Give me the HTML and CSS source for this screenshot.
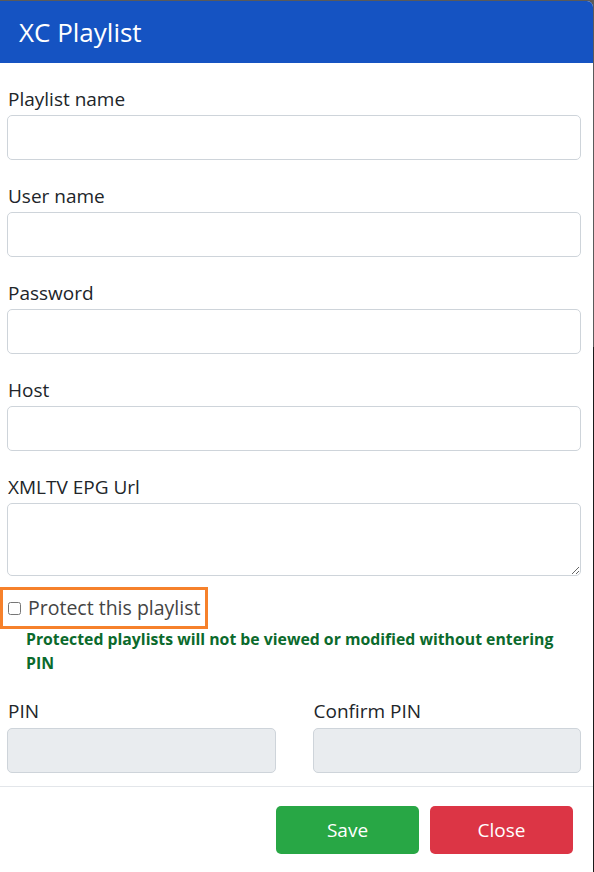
FILE: index.html
```html
<!DOCTYPE html>
<html lang="en">
<head>
<meta charset="utf-8">
<title>XC Playlist</title>
<link rel="stylesheet" href="styles.css">
</head>
<body>
<div class="dialog">
  <header class="dialog-header">
    <h5 class="dialog-title">XC Playlist</h5>
  </header>
  <form class="dialog-body">
    <div class="field">
      <label class="field-label" for="pl-name">Playlist name</label>
      <input class="field-input" id="pl-name" type="text">
    </div>
    <div class="field">
      <label class="field-label" for="pl-user">User name</label>
      <input class="field-input" id="pl-user" type="text">
    </div>
    <div class="field">
      <label class="field-label" for="pl-pass">Password</label>
      <input class="field-input" id="pl-pass" type="password">
    </div>
    <div class="field">
      <label class="field-label" for="pl-host">Host</label>
      <input class="field-input" id="pl-host" type="text">
    </div>
    <div class="field field-area">
      <label class="field-label" for="pl-epg">XMLTV EPG Url</label>
      <textarea class="field-input field-textarea" id="pl-epg"></textarea>
    </div>
    <label class="protect">
      <input class="protect-check" type="checkbox">
      <span class="protect-text">Protect this playlist</span>
    </label>
    <p class="protect-note">Protected playlists will not be viewed or modified without entering PIN</p>
    <div class="pin-row">
      <div class="pin-field">
        <label class="field-label" for="pl-pin">PIN</label>
        <input class="field-input field-disabled" id="pl-pin" type="password" disabled>
      </div>
      <div class="pin-field">
        <label class="field-label" for="pl-pin2">Confirm PIN</label>
        <input class="field-input field-disabled" id="pl-pin2" type="password" disabled>
      </div>
    </div>
  </form>
  <footer class="dialog-footer">
    <button class="btn btn-save" type="button">Save</button>
    <button class="btn btn-close" type="button">Close</button>
  </footer>
</div>
</body>
</html>
```

FILE: styles.css
```css
* {
  box-sizing: border-box;
}

html {
  background: linear-gradient(to bottom, #5a5a5a 0, #5a5a5a 347px, #1a1a1a 347px, #1a1a1a 100%);
  min-height: 100%;
}

body {
  margin: 0;
  font-family: "Open Sans", "Noto Sans", "Liberation Sans", sans-serif;
  color: #212529;
}

.dialog {
  width: 593px;
  margin-top: 1px;
  background: #ffffff;
  border-top-right-radius: 6px;
  overflow: hidden;
}

.dialog-header {
  height: 62px;
  background: #1553c2;
  display: flex;
  align-items: center;
  padding-left: 19px;
}

.dialog-title {
  margin: 0;
  color: #ffffff;
  font-size: 26px;
  font-weight: 400;
  line-height: 1;
  padding-bottom: 1px;
}

.dialog-body {
  margin: 0;
  padding: 22px 12px 13px 7px;
  display: flex;
  flex-direction: column;
}

.field {
  display: flex;
  flex-direction: column;
  margin-bottom: 22px;
}

.field-area {
  margin-bottom: 11px;
}

.field-label {
  display: block;
  font-size: 19px;
  line-height: 28px;
  margin: 0 0 2px 1px;
  color: #212529;
}

.field-input {
  display: block;
  width: 100%;
  height: 45px;
  margin: 0;
  border: 1px solid #ced4da;
  border-radius: 5px;
  background: #ffffff;
  font: inherit;
  font-size: 19px;
  padding: 6px 12px;
}

.field-textarea {
  height: 73px;
  resize: vertical;
}

.field-disabled {
  background: #e9ecef;
}

.protect {
  align-self: flex-start;
  display: inline-flex;
  align-items: center;
  height: 42px;
  margin-left: -7px;
  padding: 0 5px 0 5px;
  border: 3px solid #f6812b;
  gap: 7px;
}

.protect-check {
  width: 13px;
  height: 13px;
  margin: 1px 0 0 0;
}

.protect-text {
  font-size: 19.5px;
  line-height: 28px;
  color: #444444;
}

.protect-note {
  margin: -2px 0 0 19px;
  font-size: 15.8px;
  font-weight: 700;
  line-height: 24px;
  color: #0b6a2c;
}

.pin-row {
  display: grid;
  grid-template-columns: 1fr 1fr;
  column-gap: 37px;
  margin-top: 22px;
}

.pin-field .field-label {
  margin-bottom: 3px;
}

.dialog-footer {
  border-top: 1px solid #e3e6ea;
  padding: 19px 20px 18px 0;
  display: flex;
  justify-content: flex-end;
  gap: 11px;
}

.btn {
  width: 143px;
  height: 48px;
  border: none;
  border-radius: 5px;
  color: #ffffff;
  font-family: inherit;
  font-size: 19px;
  padding: 0;
}

.btn-save {
  background: #28a745;
}

.btn-close {
  background: #dc3545;
}
```
